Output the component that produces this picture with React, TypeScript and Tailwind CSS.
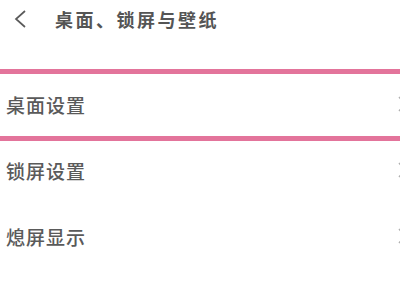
import React from 'react';

const font = { fontFamily: '"Noto Sans CJK SC", "Noto Sans", sans-serif' };

const Chevron: React.FC = () => (
  <svg className="w-[10px] h-[18px] mr-[-7px] shrink-0" viewBox="0 0 10 18" fill="none" stroke="#b0b0b0" strokeWidth="1.4">
    <path d="M2 2l6 7-6 7" />
  </svg>
);

const Row: React.FC<{ label: string; highlighted?: boolean }> = ({ label, highlighted }) => (
  <div
    className={
      highlighted
        ? 'h-[72px] border-y-[5px] border-[#e3749b] flex items-start justify-between pl-[6px] pt-[21px]'
        : 'h-[66px] flex items-start justify-between pl-[6px] pt-[20px]'
    }
  >
    <span className="text-[19px] leading-[19px] tracking-[1px] text-[#5a5a5a] font-medium">{label}</span>
    <Chevron />
  </div>
);

export default function App() {
  return (
    <div className="w-[400px] h-[300px] overflow-hidden bg-white" style={font}>
      <div className="h-[69px] flex items-start pt-[10px]">
        <svg className="ml-[13px] w-[14px] h-[18px] shrink-0" viewBox="0 0 14 18" fill="none" stroke="#5a5a5a" strokeWidth="1.7">
          <path d="M12 1L3 9l9 8" />
        </svg>
        <span className="ml-[28px] text-[18px] leading-[18px] tracking-[2.5px] text-[#555555] font-semibold">
          桌面、锁屏与壁纸
        </span>
      </div>
      <Row label="桌面设置" highlighted />
      <Row label="锁屏设置" />
      <Row label="熄屏显示" />
    </div>
  );
}
